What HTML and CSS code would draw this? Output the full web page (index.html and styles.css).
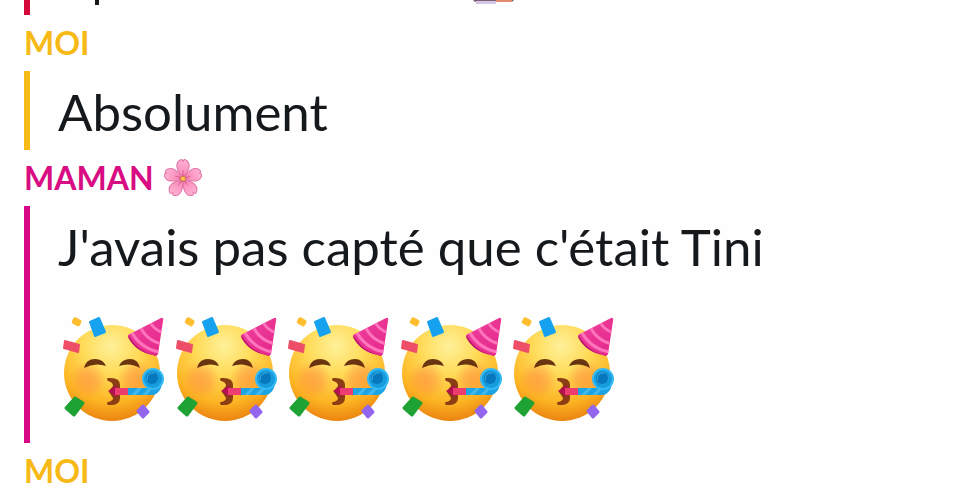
FILE: index.html
```html
<!DOCTYPE html>
<html lang="fr">
<head>
  <meta charset="UTF-8" />
  <meta name="viewport" content="width=device-width, initial-scale=1.0"/>
  <title>Discussion</title>
  <link rel="stylesheet" href="styles.css">
</head>
<body>

  <svg class="sprites" width="0" height="0" aria-hidden="true">
    <defs>
      <radialGradient id="skin" cx="48" cy="30" r="78" gradientUnits="userSpaceOnUse">
        <stop offset="0" stop-color="#fff09a"/>
        <stop offset="0.35" stop-color="#ffdc5a"/>
        <stop offset="0.72" stop-color="#fdb524"/>
        <stop offset="1" stop-color="#e87c0c"/>
      </radialGradient>
      <radialGradient id="cheek">
        <stop offset="0" stop-color="#ff8242" stop-opacity="0.5"/>
        <stop offset="0.5" stop-color="#ff8242" stop-opacity="0.35"/>
        <stop offset="1" stop-color="#ff8a3d" stop-opacity="0"/>
      </radialGradient>
      <linearGradient id="hat" x1="0" y1="0" x2="1" y2="1">
        <stop offset="0" stop-color="#f0459f"/>
        <stop offset="1" stop-color="#e32489"/>
      </linearGradient>
      <radialGradient id="petal" cx="56" cy="58" r="54" gradientUnits="userSpaceOnUse">
        <stop offset="0" stop-color="#e8589a"/>
        <stop offset="0.35" stop-color="#fa90bd"/>
        <stop offset="1" stop-color="#ffb0d2"/>
      </radialGradient>
      <clipPath id="hat-shape">
        <path d="M65 19 L98 2 Q101 1 100 5 L95 38 Q94 41 90 39 Q73 36 65 21 Z"/>
      </clipPath>
      <path id="petal-shape" d="M56 55 C45 43 36 32 38 17 Q40 6 49 2 Q53 0 56 7 Q59 0 63 2 Q72 6 74 17 C76 32 67 43 56 55 Z"/>
    </defs>

    <symbol id="party" viewBox="0 0 102 106">
      <circle cx="49" cy="57" r="48" fill="url(#skin)"/>
      <circle cx="25" cy="64" r="19" fill="url(#cheek)"/>
      <circle cx="73" cy="63" r="19" fill="url(#cheek)"/>
      <path d="M21 52 Q23 43 32 43 Q40 43 43 50 Q32 46 21 52 Z" fill="#6b3410"/>
      <path d="M56 50 Q59 43 67 43 Q75 43 77 52 Q67 46 56 50 Z" fill="#6b3410"/>
      <path d="M45 62 Q57 61 57 69 V82 Q57 90 45 89 Q43 87 45 86 Q50 85 50 82 L46 76 V75 L50 70 Q50 66 45 65 Q43 63 45 62 Z" fill="#8b3d13"/>
      <path d="M45 75 L54 69 V81 Z" fill="#b40f50"/>
      <path d="M52 72 H66 V79 H52 Z" fill="#ec3c70"/>
      <path d="M65 72 H91 L99 67 Q98 77 90 79 H65 Z" fill="#1ba3e4"/>
      <path d="M68 79 L75 72 H79 L73 79 Z M79 79 L86 72 H90 L84 79 Z" fill="#40b8ec"/>
      <circle cx="90" cy="63" r="11" fill="#36b8f3"/>
      <circle cx="90" cy="63" r="9" fill="#169bdd"/>
      <circle cx="89" cy="62" r="6" fill="#0878bd"/>
      <path d="M84 64 Q84 56 91 57" fill="none" stroke="#3fb4ea" stroke-width="1"/>
      <g clip-path="url(#hat-shape)">
        <path d="M60 0 H102 V44 H60 Z" fill="url(#hat)"/>
        <path d="M67 13 Q76 32 96 36 M76 8 Q82 24 99 28 M86 4 Q90 14 101 17" fill="none" stroke="#ff75bd" stroke-width="3"/>
        <path d="M65 21 Q75 38 93 41" fill="none" stroke="#bd166c" stroke-width="3"/>
      </g>
      <rect x="9" y="2" width="9" height="7" rx="2" fill="#fdbd2d" transform="rotate(28 13 6)"/>
      <path d="M27 6 L36 2 L42 16 L32 20 Z" fill="#16a2ef" stroke="#16a2ef" stroke-width="2" stroke-linejoin="round"/>
      <path d="M2 25 L16 29 L15 36 L1 32 Z" fill="#ef4e68" stroke="#ef4e68" stroke-width="2" stroke-linejoin="round"/>
      <path d="M3 92 L12 82 L20 87 L11 99 Z" fill="#1ea233" stroke="#1ea233" stroke-width="3" stroke-linejoin="round"/>
      <path d="M75 95 L80 90 L85 96 L80 101 Z" fill="#9366ef" stroke="#9366ef" stroke-width="3" stroke-linejoin="round"/>
    </symbol>
  </svg>

  <main class="chat">
    <section class="message message-cut">
      <div class="bubble bubble-red">
        <svg class="cut-line" viewBox="0 0 458 15" aria-hidden="true">
          <path d="M37 0 H41 V5 H37 Z" fill="#16191c"/>
          <path d="M415 0 H456 L454 2 H417 Z" fill="#7d6077"/>
          <path d="M418 1 H438 V4 H418 Z" fill="#d4c6e6"/>
          <path d="M438 0 H454 V2 H438 Z" fill="#df8b6c"/>
        </svg>
      </div>
    </section>

    <section class="message">
      <h2 class="sender sender-yellow">MOI</h2>
      <div class="bubble bubble-yellow">
        <p class="text">Absolument</p>
      </div>
    </section>

    <section class="message">
      <h2 class="sender sender-pink">MAMAN
        <svg class="flower" viewBox="0 0 112 112" role="img" aria-label="Fleur de cerisier">
          <g fill="url(#petal)" stroke="#e277a6" stroke-width="3">
            <use href="#petal-shape"/>
            <use href="#petal-shape" transform="rotate(72 56 58)"/>
            <use href="#petal-shape" transform="rotate(144 56 58)"/>
            <use href="#petal-shape" transform="rotate(216 56 58)"/>
            <use href="#petal-shape" transform="rotate(288 56 58)"/>
          </g>
          <path d="M56 58 V34 M56 58 L79 50 M56 58 L70 77 M56 58 L42 77 M56 58 L33 50" stroke="#cf4885" stroke-width="2"/>
          <rect x="49" y="51" width="14" height="14" rx="4" fill="#ffc14f" stroke="#b75b38" stroke-width="2"/>
        </svg>
      </h2>
      <div class="bubble bubble-pink">
        <p class="text">J'avais pas capté que c'était Tini</p>
        <div class="emojis" role="img" aria-label="Cinq visages qui font la fête">
          <svg class="emoji"><use href="#party"/></svg>
          <svg class="emoji"><use href="#party"/></svg>
          <svg class="emoji"><use href="#party"/></svg>
          <svg class="emoji"><use href="#party"/></svg>
          <svg class="emoji"><use href="#party"/></svg>
        </div>
      </div>
    </section>

    <section class="message">
      <h2 class="sender sender-yellow sender-last">MOI</h2>
    </section>
  </main>

</body>
</html>
```
FILE: styles.css
```css
* {
  box-sizing: border-box;
}

body {
  margin: 0;
  background: #fefefe;
  color: #16191c;
  font-family: Lato, "Noto Sans", sans-serif;
}

.sprites {
  position: absolute;
}

.chat {
  padding: 0 24px;
}

.sender {
  display: flex;
  align-items: center;
  gap: 10px;
  margin: 0;
  padding: 8px 0;
  font-size: 32px;
  font-weight: 700;
  line-height: 40px;
}

.sender-last {
  padding-bottom: 0;
}

.sender-yellow {
  color: #f7b916;
}

.sender-pink {
  color: #d90d83;
}

.flower {
  width: 38px;
  height: 38px;
}

.bubble {
  padding: 11px 0 8px 28px;
  border-left: 6px solid;
}

.bubble-red {
  border-color: #d6083b;
}

.bubble-yellow {
  border-color: #f9b916;
}

.bubble-pink {
  padding-bottom: 21px;
  border-color: #d90787;
}

.message-cut .bubble {
  padding-top: 0;
  padding-bottom: 0;
}

.cut-line {
  display: block;
  width: 458px;
  height: 15px;
}

.text {
  margin: 0;
  font-size: 51px;
  line-height: 60px;
}

.emojis {
  display: flex;
  justify-content: space-between;
  max-width: 557px;
  margin-top: 39px;
  padding-left: 5px;
}

.emoji {
  width: 102px;
  height: 106px;
}
```
